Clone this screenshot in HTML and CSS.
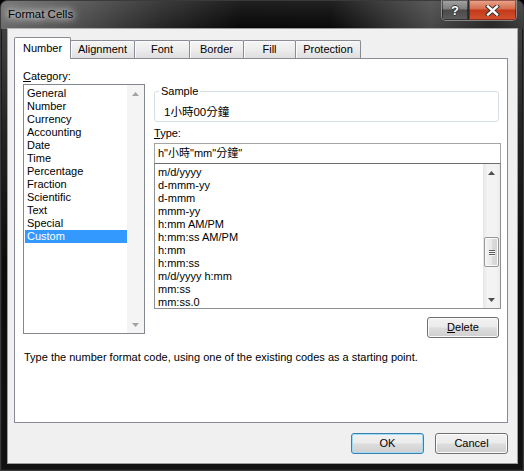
FILE: index.html
```html
<!DOCTYPE html>
<html>
<head>
<meta charset="utf-8">
<title>Format Cells</title>
<link rel="stylesheet" href="styles.css">
</head>
<body>
<div class="window">
  <div class="titlebar">
    <div class="title">Format Cells</div>
    <div class="caption-btns">
      <div class="cbtn help"><span class="qmark">?</span></div>
      <div class="cbtn close">
        <svg width="15" height="11" viewBox="0 0 15 11">
          <path d="M3 1.5 L12 9.5 M12 1.5 L3 9.5" stroke="#2b2b2b" stroke-width="4.2" stroke-linecap="square" fill="none"/>
          <path d="M3 1.5 L12 9.5 M12 1.5 L3 9.5" stroke="#ffffff" stroke-width="2.4" stroke-linecap="square" fill="none"/>
        </svg>
      </div>
    </div>
  </div>
  <div class="client">
    <div class="tabs">
      <div class="tab active w-number">Number</div>
      <div class="tab w-align">Alignment</div>
      <div class="tab w-font">Font</div>
      <div class="tab w-border">Border</div>
      <div class="tab w-fill">Fill</div>
      <div class="tab w-prot">Protection</div>
    </div>
    <div class="panel">
      <div class="cols">
        <div class="left">
          <div class="label"><u>C</u>ategory:</div>
          <div class="listbox cat">
            <div class="items">
              <div class="item">General</div>
              <div class="item">Number</div>
              <div class="item">Currency</div>
              <div class="item">Accounting</div>
              <div class="item">Date</div>
              <div class="item">Time</div>
              <div class="item">Percentage</div>
              <div class="item">Fraction</div>
              <div class="item">Scientific</div>
              <div class="item">Text</div>
              <div class="item">Special</div>
              <div class="item selected">Custom</div>
            </div>
            <div class="vscroll disabled">
              <div class="arrow"><svg width="7" height="4" viewBox="0 0 7 4"><polygon points="0,4 3.5,0 7,4"/></svg></div>
              <div class="track"></div>
              <div class="arrow"><svg width="7" height="4" viewBox="0 0 7 4"><polygon points="0,0 3.5,4 7,0"/></svg></div>
            </div>
          </div>
        </div>
        <div class="right">
          <div class="group">
            <div class="group-title">Sample</div>
            <div class="sample-value">1小時00分鐘</div>
          </div>
          <div class="label type-label"><u>T</u>ype:</div>
          <div class="textbox">h"小時"mm"分鐘"</div>
          <div class="listbox types">
            <div class="items">
              <div class="item">m/d/yyyy</div>
              <div class="item">d-mmm-yy</div>
              <div class="item">d-mmm</div>
              <div class="item">mmm-yy</div>
              <div class="item">h:mm AM/PM</div>
              <div class="item">h:mm:ss AM/PM</div>
              <div class="item">h:mm</div>
              <div class="item">h:mm:ss</div>
              <div class="item">m/d/yyyy h:mm</div>
              <div class="item">mm:ss</div>
              <div class="item">mm:ss.0</div>
            </div>
            <div class="vscroll">
              <div class="arrow"><svg width="7" height="4" viewBox="0 0 7 4"><polygon points="0,4 3.5,0 7,4"/></svg></div>
              <div class="track">
                <div class="thumb"><span class="grip"></span><span class="grip"></span><span class="grip"></span></div>
              </div>
              <div class="arrow"><svg width="7" height="4" viewBox="0 0 7 4"><polygon points="0,0 3.5,4 7,0"/></svg></div>
            </div>
          </div>
          <button class="btn delete"><u>D</u>elete</button>
        </div>
      </div>
      <div class="desc">Type the number format code, using one of the existing codes as a starting point.</div>
    </div>
    <div class="buttons">
      <button class="btn default">OK</button>
      <button class="btn">Cancel</button>
    </div>
  </div>
</div>
</body>
</html>
```
FILE: styles.css
```css
* { box-sizing: border-box; }
html, body { margin: 0; padding: 0; }
body {
  width: 524px;
  height: 471px;
  overflow: hidden;
  background: #000;
  font: 11px/13px "Liberation Sans", Tahoma, "Noto Sans CJK TC", sans-serif;
  color: #000;
}
u { text-decoration: underline; text-underline-offset: 1px; }

.window {
  width: 524px;
  height: 471px;
  border: 1px solid #3a3a3a;
  border-radius: 7px 7px 0 0;
  background: linear-gradient(180deg, #4a4a4a 0, #262626 120px, #0c0c0c 260px, #111 100%);
  box-shadow: inset 0 0 0 1px #1a1a1a;
  display: flex;
  flex-direction: column;
}

.titlebar {
  height: 28px;
  display: flex;
  justify-content: space-between;
  align-items: flex-start;
  border-radius: 6px 6px 0 0;
  background:
    linear-gradient(180deg, rgba(255,255,255,0.10) 0, rgba(255,255,255,0) 28px),
    linear-gradient(90deg, #6a6a6a 0, #505050 70px, #262626 160px, #070707 240px, #080808 330px, #303030 390px, #474747 430px, #262626 490px, #3a3a3a 100%);
}
.title {
  padding-left: 7px;
  line-height: 26px;
  font-size: 11.5px;
  color: #000;
  text-shadow: 0 0 6px #fff, 0 0 10px rgba(255,255,255,0.9), 0 0 14px rgba(255,255,255,0.6);
}
.caption-btns {
  display: flex;
  margin-top: -1px;
  margin-right: 6px;
  height: 21px;
  border: 1px solid rgba(200,200,200,0.55);
  border-top: none;
  border-radius: 0 0 5px 5px;
  overflow: hidden;
}
.cbtn {
  height: 20px;
  display: flex;
  align-items: center;
  justify-content: center;
}
.help {
  width: 27px;
  border-right: 1px solid #2a2a2a;
  background: linear-gradient(180deg, #a5a5a5 0, #7d7d7d 45%, #4a4a4a 50%, #5e5e5e 100%);
  box-shadow: inset 0 0 0 1px rgba(0,0,0,0.45);
}
.qmark {
  font: bold 13px/13px "Liberation Sans", sans-serif;
  color: #fff;
  text-shadow: 1px 0 0 #333, -1px 0 0 #333, 0 1px 0 #333, 0 -1px 0 #333;
}
.close {
  width: 47px;
  background: linear-gradient(180deg, #e9a78e 0, #d66c4c 45%, #c2391a 50%, #d4522f 100%);
  box-shadow: inset 0 0 0 1px rgba(60,0,0,0.45);
}

.client {
  margin: 0 6px 7px 7px;
  height: 434px;
  background: #f0f0f0;
  box-shadow: 0 0 0 1px rgba(215,215,215,0.7);
  padding: 8px 9px 0 6px;
  display: flex;
  flex-direction: column;
}

.tabs {
  height: 21px;
  display: flex;
  align-items: flex-end;
}
.tab {
  height: 18px;
  border: 1px solid #898c95;
  border-bottom: none;
  margin-left: -1px;
  background: linear-gradient(180deg, #f5f5f5 0, #ececec 50%, #dedede 100%);
  box-shadow: inset 1px 1px 0 #fbfbfb;
  text-align: center;
  line-height: 17px;
  border-radius: 2px 2px 0 0;
}
.tab.active {
  height: 22px;
  margin-left: 0;
  margin-bottom: -1px;
  background: #fff;
  box-shadow: none;
  position: relative;
  z-index: 1;
  line-height: 21px;
}
.w-number { width: 57px; }
.w-align { width: 65px; }
.w-font { width: 56px; }
.w-border { width: 55px; }
.w-fill { width: 53px; }
.w-prot { width: 66px; }

.panel {
  height: 365px;
  border: 1px solid #898c95;
  background: #fff;
  padding-top: 10px;
}
.cols { display: flex; align-items: flex-start; }
.left { margin-left: 8px; width: 122px; }
.right { margin-left: 9px; width: 347px; display: flex; flex-direction: column; }
.label { line-height: 15px; height: 15px; }

.listbox {
  display: flex;
  border: 1px solid #828790;
  background: #fff;
}
.listbox.cat { height: 250px; }
.listbox .items { flex: 1; }
.cat .items { padding: 2px 0 0 1px; }
.item { height: 13px; line-height: 13px; padding-left: 2px; white-space: nowrap; }
.item.selected { background: #3399ff; color: #fff; }

.vscroll {
  width: 17px;
  display: flex;
  flex-direction: column;
  background: linear-gradient(90deg, #e6e6e6 0, #f3f3f3 25%, #f3f3f3 75%, #ebebeb 100%);
}
.vscroll .arrow {
  height: 17px;
  display: flex;
  align-items: center;
  justify-content: center;
}
.vscroll .arrow svg { fill: #4f4f4f; }
.vscroll.disabled { background: #f4f4f4; }
.vscroll.disabled .arrow svg { fill: #a3a3a3; }
.vscroll .track { flex: 1; }

.thumb {
  margin: 56px 1px 0 1px;
  height: 30px;
  border: 1px solid #979797;
  border-radius: 2px;
  background: linear-gradient(90deg, #f3f3f3 0, #e9e9e9 50%, #dcdcdc 51%, #d4d4d4 100%);
  box-shadow: inset 0 0 0 1px #fafafa;
  display: flex;
  flex-direction: column;
  align-items: center;
  justify-content: center;
  gap: 1px;
}
.grip {
  width: 6px;
  height: 1px;
  background: #5d5d5d;
  box-shadow: 0 1px 0 #f5f5f5;
}

.group {
  margin-top: 22px;
  width: 345px;
  height: 31px;
  border: 1px solid #d5dfe5;
  border-radius: 3px;
}
.group-title {
  width: fit-content;
  margin: -7px 0 0 4px;
  padding: 0 2px;
  background: #fff;
  line-height: 13px;
}
.sample-value {
  margin-top: 7px;
  padding-left: 9px;
  line-height: 14px;
  font-size: 11.5px;
}
.type-label { margin-top: 4px; height: 14px; line-height: 14px; }
.textbox {
  margin-top: 3px;
  height: 20px;
  border: 1px solid #a5a5a5;
  border-bottom: none;
  padding-left: 3px;
  line-height: 19px;
}
.listbox.types {
  height: 146px;
  border-color: #8e8f94;
  border-top-color: #6d6d6d;
}
.types .items { padding: 2px 0 0 1px; }

.btn {
  font: inherit;
  color: #000;
  width: 73px;
  height: 21px;
  padding: 0;
  border: 1px solid #707070;
  border-radius: 3px;
  background: linear-gradient(180deg, #f2f2f2 0, #ebebeb 48%, #dddddd 52%, #cfcfcf 100%);
  box-shadow: inset 0 0 0 1px #fbfbfb;
  line-height: 19px;
}
.btn.delete {
  align-self: flex-end;
  margin-top: 8px;
  margin-right: 2px;
  width: 72px;
}
.btn.default {
  border-color: #3c7fb1;
  box-shadow: inset 0 0 0 1px #9fdcf6;
}

.desc {
  margin: 12px 0 0 9px;
  line-height: 14px;
}

.buttons {
  margin-top: 10px;
  display: flex;
  justify-content: flex-end;
  gap: 11px;
}
```
